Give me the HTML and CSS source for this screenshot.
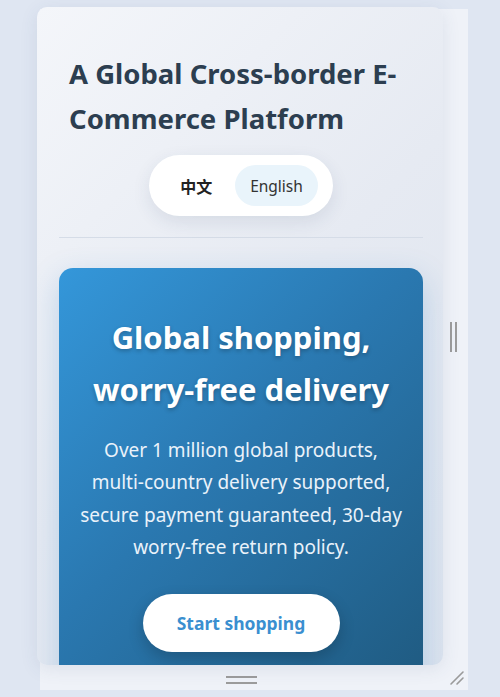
FILE: index.html
```html
<!DOCTYPE html>
<html lang="en">
<head>
<meta charset="utf-8">
<title>Global Cross-border E-Commerce</title>
<link rel="stylesheet" href="styles.css">
</head>
<body>
<div class="frame">
  <main class="card">
    <h1 class="title">A Global Cross-border E-Commerce Platform</h1>
    <div class="lang-wrap">
      <div class="lang-toggle">
        <button class="lang zh">中文</button>
        <button class="lang en active">English</button>
      </div>
    </div>
    <hr class="divider">
    <section class="hero">
      <h2 class="hero-title">Global shopping, worry-free delivery</h2>
      <p class="hero-text">Over 1 million global products, multi-country delivery supported, secure payment guaranteed, 30-day worry-free return policy.</p>
      <button class="cta">Start shopping</button>
    </section>
  </main>
  <div class="handle-side"><span class="grip-v"></span><span class="grip-v"></span></div>
  <div class="handle-bottom"><span class="grip-h"></span><span class="grip-h"></span></div>
  <div class="handle-corner">
    <svg width="16" height="16" viewBox="0 0 16 16"><path d="M2 14 L14 2 M8 14 L14 8" stroke="#9a9a9a" stroke-width="1.6" stroke-linecap="round" fill="none"/></svg>
  </div>
</div>
</body>
</html>
```
FILE: styles.css
```css
* { box-sizing: border-box; }
html, body { margin: 0; }
body {
  background: #dfe6f2;
  font-family: "Noto Sans", "Open Sans", "Noto Sans CJK SC", sans-serif;
  padding: 9px 0 0 40px;
  height: 697px;
  overflow: hidden;
}
.frame {
  width: 428px;
  height: 681px;
  background: #eff2f8;
  display: grid;
  grid-template-columns: 403px 25px;
  grid-template-rows: 656px 25px;
}
.card {
  grid-column: 1;
  grid-row: 1;
  width: 406px;
  height: 658px;
  margin: -2px 0 0 -3px;
  border-radius: 10px;
  overflow: hidden;
  background: linear-gradient(135deg, #f4f6fa 0%, #e6eaf2 50%, #dce3ee 100%);
  box-shadow: 0 4px 18px rgba(60, 80, 120, 0.10);
  padding: 44px 20px 0 22px;
  position: relative;
  z-index: 1;
}
.title {
  margin: 0 0 14px 10px;
  font-size: 27.5px;
  line-height: 45px;
  font-weight: 700;
  color: #2c3e50;
}
.lang-wrap { display: flex; justify-content: center; }
.lang-toggle {
  display: flex;
  align-items: center;
  gap: 7px;
  background: #fff;
  border-radius: 31px;
  padding: 10px 15px 10px 15px;
  box-shadow: 0 6px 18px rgba(40, 60, 100, 0.10);
}
.lang {
  border: 0;
  background: transparent;
  border-radius: 21px;
  height: 41px;
  padding: 0 15px;
  font-family: "Noto Sans", "Noto Sans CJK SC", sans-serif;
  font-size: 15.5px;
  color: #333;
  cursor: pointer;
}
.lang.zh {
  font-family: "Noto Sans CJK SC", sans-serif;
  font-weight: 700;
  font-size: 16px;
  color: #222;
  padding: 0 16px;
}
.lang.active { background: #e9f4fb; }
.divider {
  border: 0;
  border-top: 1px solid #d5dce7;
  margin: 21px 0 30px;
}
.hero {
  border-radius: 14px;
  background: linear-gradient(135deg, #3497da 0%, #2a78b0 45%, #1f5a80 100%);
  box-shadow: 0 10px 30px rgba(52, 130, 200, 0.25);
  padding: 43px 20px 40px;
  text-align: center;
  color: #fff;
}
.hero-title {
  margin: 0 0 19px;
  font-size: 31px;
  line-height: 52px;
  font-weight: 700;
  text-shadow: 0 2px 4px rgba(0, 0, 0, 0.25);
}
.hero-text {
  margin: 0 0 30px;
  font-size: 19px;
  line-height: 32.4px;
  color: #eaf2fa;
}
.cta {
  border: 0;
  background: #fff;
  color: #3a8fd0;
  font-family: "Noto Sans", sans-serif;
  font-weight: 700;
  font-size: 17.5px;
  height: 58px;
  width: 197px;
  border-radius: 29px;
  box-shadow: 0 6px 16px rgba(0, 0, 0, 0.2);
  cursor: pointer;
}
.handle-side {
  grid-column: 2;
  grid-row: 1;
  display: flex;
  justify-content: center;
  align-items: center;
  gap: 3px;
  padding-right: 4px;
}
.grip-v { width: 2px; height: 30px; background: #9c9c9c; }
.handle-bottom {
  grid-column: 1;
  grid-row: 2;
  display: flex;
  flex-direction: column;
  align-items: center;
  justify-content: center;
  gap: 4px;
  padding-top: 4px;
}
.grip-h { width: 31px; height: 2px; background: #9c9c9c; }
.handle-corner {
  grid-column: 2;
  grid-row: 2;
  display: flex;
  align-items: center;
  justify-content: flex-start;
  padding-left: 6px;
}
.handle-corner svg { display: block; }
```
